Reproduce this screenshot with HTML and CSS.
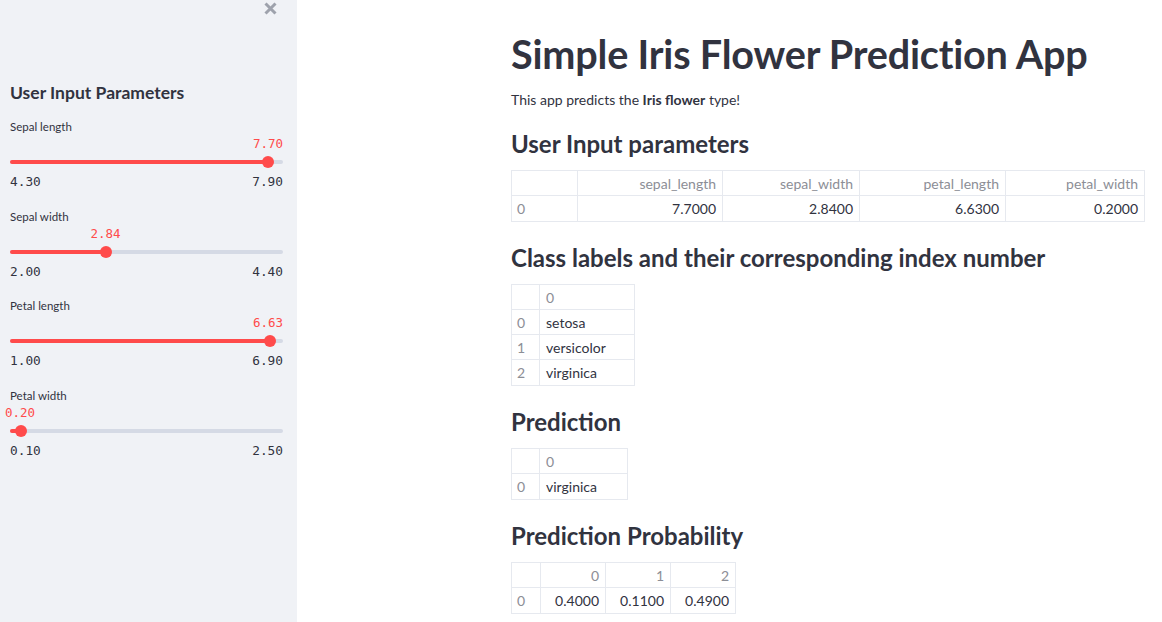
FILE: index.html
```html
<!DOCTYPE html>
<html>
<head>
<meta charset="utf-8">
<link rel="stylesheet" href="styles.css">
</head>
<body>
<div class="app">
  <aside class="sidebar">
    <div class="close-row">
      <svg class="close" width="13" height="13" viewBox="0 0 13 13"><path d="M1.5 1.5 L11.5 11.5 M11.5 1.5 L1.5 11.5" stroke="#9ea2ac" stroke-width="3" stroke-linecap="butt"/></svg>
    </div>
    <h3 class="side-title">User Input Parameters</h3>

    <div class="slider">
      <div class="s-label">Sepal length</div>
      <div class="s-body">
        <div class="s-value-row"><span class="s-value end">7.70</span></div>
        <div class="track"><div class="fill" style="width:94.44%"></div><div class="thumb" style="left:94.44%"></div></div>
        <div class="minmax"><span>4.30</span><span>7.90</span></div>
      </div>
    </div>

    <div class="slider">
      <div class="s-label">Sepal width</div>
      <div class="s-body">
        <div class="s-value-row"><span class="s-value mid" style="left:35%">2.84</span></div>
        <div class="track"><div class="fill" style="width:35%"></div><div class="thumb" style="left:35%"></div></div>
        <div class="minmax"><span>2.00</span><span>4.40</span></div>
      </div>
    </div>

    <div class="slider">
      <div class="s-label">Petal length</div>
      <div class="s-body">
        <div class="s-value-row"><span class="s-value end">6.63</span></div>
        <div class="track"><div class="fill" style="width:95.42%"></div><div class="thumb" style="left:95.42%"></div></div>
        <div class="minmax"><span>1.00</span><span>6.90</span></div>
      </div>
    </div>

    <div class="slider">
      <div class="s-label">Petal width</div>
      <div class="s-body">
        <div class="s-value-row"><span class="s-value start">0.20</span></div>
        <div class="track"><div class="fill" style="width:4.17%"></div><div class="thumb" style="left:4.17%"></div></div>
        <div class="minmax"><span>0.10</span><span>2.50</span></div>
      </div>
    </div>
  </aside>

  <main class="main">
    <h1 class="title">Simple Iris Flower Prediction App</h1>
    <p class="intro">This app predicts the <b>Iris flower</b> type!</p>

    <h2 class="h2">User Input parameters</h2>
    <table class="df df-params">
      <colgroup><col style="width:66px"><col style="width:145px"><col style="width:137px"><col style="width:146px"><col style="width:139px"></colgroup>
      <tr class="hdr"><th></th><th>sepal_length</th><th>sepal_width</th><th>petal_length</th><th>petal_width</th></tr>
      <tr><td class="idx">0</td><td>7.7000</td><td>2.8400</td><td>6.6300</td><td>0.2000</td></tr>
    </table>

    <h2 class="h2">Class labels and their corresponding index number</h2>
    <table class="df left">
      <colgroup><col style="width:28px"><col style="width:95px"></colgroup>
      <tr class="hdr"><th></th><th>0</th></tr>
      <tr><td class="idx">0</td><td>setosa</td></tr>
      <tr><td class="idx">1</td><td>versicolor</td></tr>
      <tr><td class="idx">2</td><td>virginica</td></tr>
    </table>

    <h2 class="h2">Prediction</h2>
    <table class="df left">
      <colgroup><col style="width:28px"><col style="width:88px"></colgroup>
      <tr class="hdr"><th></th><th>0</th></tr>
      <tr><td class="idx">0</td><td>virginica</td></tr>
    </table>

    <h2 class="h2">Prediction Probability</h2>
    <table class="df">
      <colgroup><col style="width:29px"><col style="width:65px"><col style="width:65px"><col style="width:65px"></colgroup>
      <tr class="hdr"><th></th><th>0</th><th>1</th><th>2</th></tr>
      <tr><td class="idx">0</td><td>0.4000</td><td>0.1100</td><td>0.4900</td></tr>
    </table>
  </main>
</div>
</body>
</html>
```

FILE: styles.css
```css
* { box-sizing: border-box; }
html, body { margin: 0; padding: 0; }
body {
  font-family: Lato, "Noto Sans", sans-serif;
  color: #31333f;
  background: #ffffff;
  width: 1162px;
  height: 622px;
  overflow: hidden;
}
.app { display: flex; height: 622px; }

.sidebar {
  width: 297px;
  flex: 0 0 297px;
  background: #f0f2f6;
  padding: 0 14px 0 10px;
}
.close-row { display: flex; justify-content: flex-end; padding: 2px 6px 0 0; height: 16px; }
.close { display: block; }

.side-title {
  margin: 66px 0 0 0;
  font-size: 17.5px;
  font-weight: 700;
  line-height: 22px;
  color: #31333f;
}
.slider { height: 89.7px; }
.s-label {
  font-size: 11.5px;
  line-height: 16px;
  padding-top: 15px;
  color: #31333f;
}
.s-body { position: relative; }
.s-value-row { position: relative; height: 19px; }
.s-value {
  position: absolute;
  top: 1px;
  font-family: "DejaVu Sans Mono", monospace;
  font-size: 12.5px;
  color: #ff4b4b;
  line-height: 16px;
}
.s-value.end { right: 0; }
.s-value.start { left: -5px; }
.s-value.mid { transform: translateX(-50%); }
.track {
  position: relative;
  height: 4px;
  background: #d5dae5;
  border-radius: 2px;
  margin-top: 6px;
}
.fill { height: 4px; background: #ff4b4b; border-radius: 2px; }
.thumb {
  position: absolute;
  top: -4px;
  width: 12px;
  height: 12px;
  margin-left: -6px;
  border-radius: 50%;
  background: #ff4b4b;
}
.minmax {
  display: flex;
  justify-content: space-between;
  font-family: "DejaVu Sans Mono", monospace;
  font-size: 12.8px;
  line-height: 16px;
  margin-top: 10px;
  color: #31333f;
}

.main { flex: 1; padding: 30px 0 0 214px; }
.title {
  margin: 0;
  font-size: 39.6px;
  font-weight: 700;
  line-height: 48px;
  letter-spacing: -0.2px;
  color: #31333f;
}
.intro { margin: 12px 0 0 0; font-size: 14px; line-height: 20px; }
.intro b { font-weight: 700; }
.h2 {
  margin: 19px 0 0 0;
  font-size: 24px;
  font-weight: 700;
  line-height: 30px;
  color: #31333f;
}
.df + .h2 { margin-top: 21px; }
.df {
  border-collapse: separate;
  border-spacing: 0;
  table-layout: fixed;
  margin-top: 11px;
  font-size: 14px;
  border-top: 1px solid #e6e9ef;
  border-left: 1px solid #e6e9ef;
}
.df th, .df td {
  border-right: 1px solid #e6e9ef;
  border-bottom: 1px solid #e6e9ef;
  height: 25px;
  padding: 0 6px;
  text-align: right;
  font-weight: 400;
  white-space: nowrap;
}
.df tr:last-child td { height: 26px; }
.df th { color: #8c8e96; }
.df td { color: #31333f; }
.df td.idx { text-align: left; color: #8c8e96; padding-left: 5px; }
.df.left th, .df.left td { text-align: left; }
```
